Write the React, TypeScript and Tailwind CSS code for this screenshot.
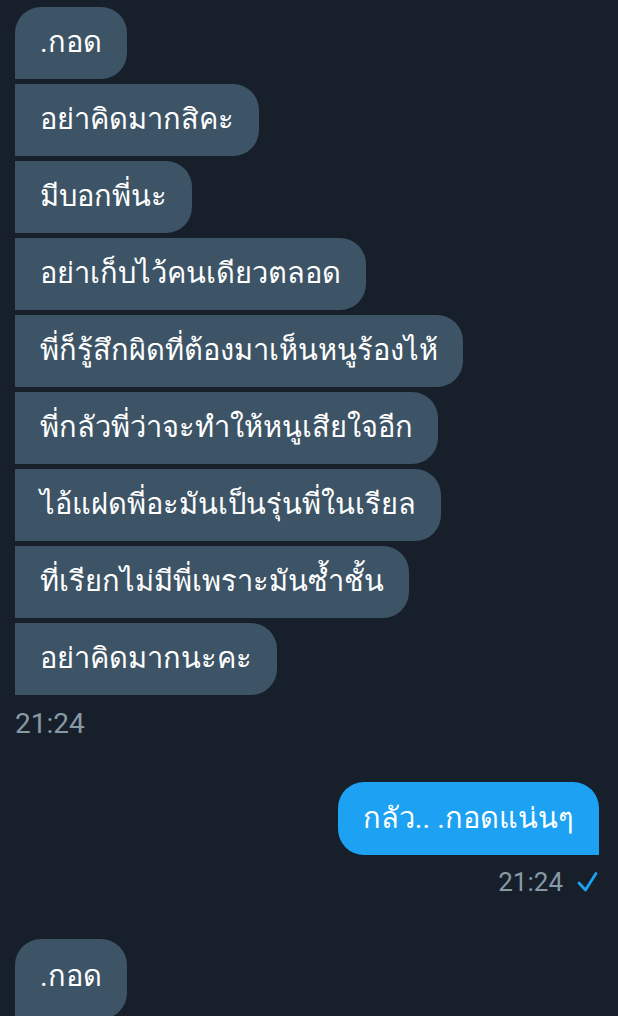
import React from "react";

const received = [
  ".กอด",
  "อย่าคิดมากสิคะ",
  "มีบอกพี่นะ",
  "อย่าเก็บไว้คนเดียวตลอด",
  "พี่ก็รู้สึกผิดที่ต้องมาเห็นหนูร้องไห้",
  "พี่กลัวพี่ว่าจะทำให้หนูเสียใจอีก",
  "ไอ้แฝดพี่อะมันเป็นรุ่นพี่ในเรียล",
  "ที่เรียกไม่มีพี่เพราะมันซ้ำชั้น",
  "อย่าคิดมากนะคะ",
];

const font = { fontFamily: "Roboto, 'Noto Sans', sans-serif" };

function radiusFor(i: number) {
  if (i === 0) return "rounded-[26px] rounded-bl-none";
  return "rounded-r-[26px]";
}

export default function App() {
  return (
    <div className="w-[618px] h-[1016px] overflow-hidden bg-[#161f2a] text-white" style={font}>
      <div className="flex flex-col pt-[7px] pl-[15px] pr-[19px]">
        <div className="flex flex-col items-start gap-[5px]">
          {received.map((t, i) => (
            <div
              key={i}
              className={`bg-[#3d5466] px-[25px] h-[72px] flex items-center text-[29px] whitespace-nowrap ${radiusFor(i)}`}
            >
              {t}
            </div>
          ))}
        </div>
        <div className="mt-[12px] text-[28px] leading-[34px] text-[#8899a6]">21:24</div>

        <div className="mt-[41px] flex flex-col items-end">
          <div className="bg-[#1da1f2] px-[25px] h-[73px] flex items-center text-[29px] rounded-[26px] rounded-br-none whitespace-nowrap">
            กลัว.. .กอดแน่นๆ
          </div>
          <div className="mt-[10px] flex items-center gap-[13px] text-[26px] leading-[34px] text-[#8899a6]">
            <span>21:24</span>
            <svg width="22" height="22" viewBox="0 0 22 22" fill="none" className="mr-[1px]">
              <path d="M3 12 L9.5 19 L20 2.5" stroke="#1da1f2" strokeWidth="2.8" strokeLinecap="round" strokeLinejoin="round" />
            </svg>
          </div>
        </div>

        <div className="mt-[40px] flex flex-col items-start">
          <div className="bg-[#3d5466] px-[25px] h-[80px] flex items-center pb-[4px] text-[29px] rounded-[26px] rounded-bl-none whitespace-nowrap">
            .กอด
          </div>
        </div>
      </div>
    </div>
  );
}
